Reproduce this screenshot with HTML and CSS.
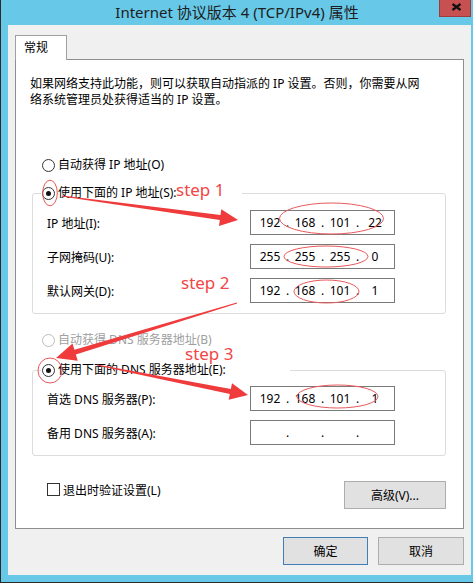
FILE: index.html
```html
<!DOCTYPE html>
<html>
<head>
<meta charset="utf-8">
<title>Internet 协议版本 4 (TCP/IPv4) 属性</title>
<link rel="stylesheet" href="styles.css">
</head>
<body>
<div class="window">
  <div class="titlebar">
    <div class="title">Internet 协议版本 4 (TCP/IPv4) 属性</div>
    <div class="close">
      <svg width="11" height="8" viewBox="0 0 11 8"><path d="M1.5 1 L9.5 7 M9.5 1 L1.5 7" stroke="#111" stroke-width="2.2" fill="none"/></svg>
    </div>
  </div>
  <div class="client">
    <div class="tabs"><div class="tab">常规</div></div>
    <div class="panel">
      <p class="intro">如果网络支持此功能，则可以获取自动指派的 IP 设置。否则，你需要从网<br>络系统管理员处获得适当的 IP 设置。</p>
      <div class="radio-row"><span class="radio"></span>自动获得 IP 地址(O)</div>
      <fieldset class="group">
        <legend class="legend-ip"><span class="radio checked"></span>使用下面的 IP 地址(S):</legend>
        <div class="field">
          <span>IP 地址(I):</span>
          <div class="ip"><span>192</span><span>.</span><span>168</span><span>.</span><span>101</span><span>.</span><span>22</span></div>
        </div>
        <div class="field">
          <span>子网掩码(U):</span>
          <div class="ip"><span>255</span><span>.</span><span>255</span><span>.</span><span>255</span><span>.</span><span>0</span></div>
        </div>
        <div class="field">
          <span>默认网关(D):</span>
          <div class="ip"><span>192</span><span>.</span><span>168</span><span>.</span><span>101</span><span>.</span><span>1</span></div>
        </div>
      </fieldset>
      <div class="radio-row disabled dns-auto"><span class="radio"></span>自动获得 DNS 服务器地址(B)</div>
      <fieldset class="group group-dns">
        <legend class="legend-dns"><span class="radio checked"></span>使用下面的 DNS 服务器地址(E):</legend>
        <div class="field">
          <span>首选 DNS 服务器(P):</span>
          <div class="ip"><span>192</span><span>.</span><span>168</span><span>.</span><span>101</span><span>.</span><span>1</span></div>
        </div>
        <div class="field">
          <span>备用 DNS 服务器(A):</span>
          <div class="ip"><span></span><span>.</span><span></span><span>.</span><span></span><span>.</span><span></span></div>
        </div>
      </fieldset>
      <div class="bottom-row">
        <div class="check-row"><span class="checkbox"></span>退出时验证设置(L)</div>
        <div class="btn btn-adv">高级(V)...</div>
      </div>
    </div>
    <div class="buttons">
      <div class="btn btn-ok">确定</div>
      <div class="btn btn-cancel">取消</div>
    </div>
  </div>
  <svg class="annot" width="473" height="583" viewBox="0 0 473 583">
    <g fill="none" stroke="#e8585b" stroke-width="1">
      <ellipse cx="50" cy="193" rx="7.3" ry="12.8"/>
      <ellipse cx="331.5" cy="218.5" rx="52" ry="15.5"/>
      <ellipse cx="326" cy="256.5" rx="42" ry="10.5"/>
      <ellipse cx="326.5" cy="291.5" rx="32.5" ry="11.5"/>
      <ellipse cx="50" cy="370.5" rx="12" ry="12.5"/>
      <ellipse cx="337.5" cy="396.5" rx="40.5" ry="11.5"/>
    </g>
    <g fill="#ef3b3b">
      <polygon points="62.07,195.5 220.5,215.09 221.3,209.15 238,220 219,226 219.82,220.05 61.93,196.5"/>
      <polygon points="236.85,302.52 74.4,349.8 72.51,343.58 56,358 77.75,360.8 75.86,354.58 237.15,303.48"/>
      <polygon points="97.1,364.51 230.84,389.04 232.01,383.15 248,395 228.69,399.83 229.86,393.94 96.9,365.49"/>
    </g>
    <g class="steps" fill="#f04646">
      <text x="176" y="196">step 1</text>
      <text x="181" y="289">step 2</text>
      <text x="185" y="360">step 3</text>
    </g>
  </svg>
</div>
</body>
</html>
```
FILE: styles.css
```css
* { box-sizing: border-box; }
html, body { margin: 0; padding: 0; }
body {
  width: 473px;
  height: 583px;
  overflow: hidden;
  font-family: "Noto Sans", "Noto Sans CJK SC", sans-serif;
  font-size: 12px;
  color: #000;
}
.window {
  position: relative;
  width: 473px;
  height: 583px;
  background: #67c8e8;
  border-left: 1px solid #2a2a2a;
  border-bottom: 1px solid #2a2a2a;
  display: flex;
  flex-direction: column;
}
.titlebar {
  height: 25px;
  flex: none;
  display: grid;
  grid-template-columns: 1fr auto 1fr;
}
.title {
  grid-column: 2;
  font-size: 15px;
  line-height: 24px;
  color: #1e1e1e;
  white-space: nowrap;
}
.close {
  grid-column: 3;
  justify-self: end;
  align-self: start;
  width: 32px;
  height: 17px;
  margin-right: 2px;
  background: #c75050;
  border: 1px solid #9e3b3b;
  border-top: none;
  display: flex;
  justify-content: center;
  align-items: flex-start;
  padding-top: 3px;
  padding-left: 2px;
}
.close svg { display: block; }
.client {
  flex: 1;
  margin: 0 2px 7px 7px;
  background: #f0f0f0;
  padding: 10px 7px 0 7px;
  display: flex;
  flex-direction: column;
}
.tabs { display: flex; }
.tab {
  position: relative;
  z-index: 1;
  width: 52px;
  height: 25px;
  margin-bottom: -1px;
  background: #fff;
  border: 1px solid #a0a0a0;
  border-bottom: none;
  padding-left: 8px;
  line-height: 24px;
}
.panel {
  height: 470px;
  background: #fff;
  border: 1px solid #8e8e8e;
  padding: 0 17px 0 16px;
  display: flex;
  flex-direction: column;
}
.intro {
  margin: 16px 0 0 -2px;
  line-height: 16px;
}
.radio-row {
  display: flex;
  align-items: center;
  height: 16px;
  line-height: 16px;
  margin-top: 49px;
  padding-left: 10px;
}
.radio {
  flex: none;
  width: 13px;
  height: 13px;
  border-radius: 50%;
  border: 1px solid #333;
  background: #fff;
  margin-right: 3px;
  display: flex;
  align-items: center;
  justify-content: center;
}
.radio.checked::after {
  content: "";
  width: 5px;
  height: 5px;
  border-radius: 50%;
  background: #111;
}
.disabled { color: #a0a0a0; }
.disabled .radio { border-color: #bcbcbc; }
.group {
  margin: 12px 0 0 0;
  min-width: 0;
  width: 414px;
  border: 1px solid #dcdcdc;
  border-radius: 3px;
  padding: 9px 0 10px 14px;
  display: flex;
  flex-direction: column;
  gap: 9px;
}
.group legend {
  padding: 0;
  margin-left: -6px;
  height: 16px;
  line-height: 16px;
  display: flex;
  align-items: center;
  padding-left: 1px;
}
.legend-ip { width: 201px; }
.legend-dns { width: 249px; }
.dns-auto { margin-top: 18px; }
.group-dns { margin-top: 14px; padding-top: 8px; }
.field {
  display: grid;
  grid-template-columns: 203px 145px;
  align-items: center;
  height: 25px;
}
.ip {
  height: 25px;
  border: 1px solid #7a7a7a;
  background: #fff;
  padding-left: 4px;
  display: grid;
  grid-template-columns: 30px 5px 30px 5px 30px 5px 30px;
  align-items: center;
  text-align: center;
  line-height: 23px;
}
.bottom-row {
  margin-top: 25px;
  display: flex;
  justify-content: space-between;
  align-items: flex-start;
  padding-left: 15px;
}
.check-row {
  margin-top: 2px;
  display: flex;
  align-items: center;
  height: 13px;
}
.checkbox {
  width: 13px;
  height: 13px;
  border: 1px solid #333;
  background: #fff;
  margin-right: 3px;
}
.btn {
  height: 28px;
  background: #e1e1e1;
  border: 1px solid #adadad;
  display: flex;
  align-items: center;
  justify-content: center;
}
.btn-adv { width: 102px; }
.buttons {
  margin-top: 8px;
  display: flex;
  justify-content: flex-end;
  gap: 10px;
}
.btn-ok { width: 85px; border-color: #3e7fb6; }
.btn-cancel { width: 86px; }
.annot {
  position: absolute;
  left: -1px;
  top: 0;
  pointer-events: none;
}
.steps text {
  font-family: "Noto Sans", sans-serif;
  font-size: 17px;
}
```
